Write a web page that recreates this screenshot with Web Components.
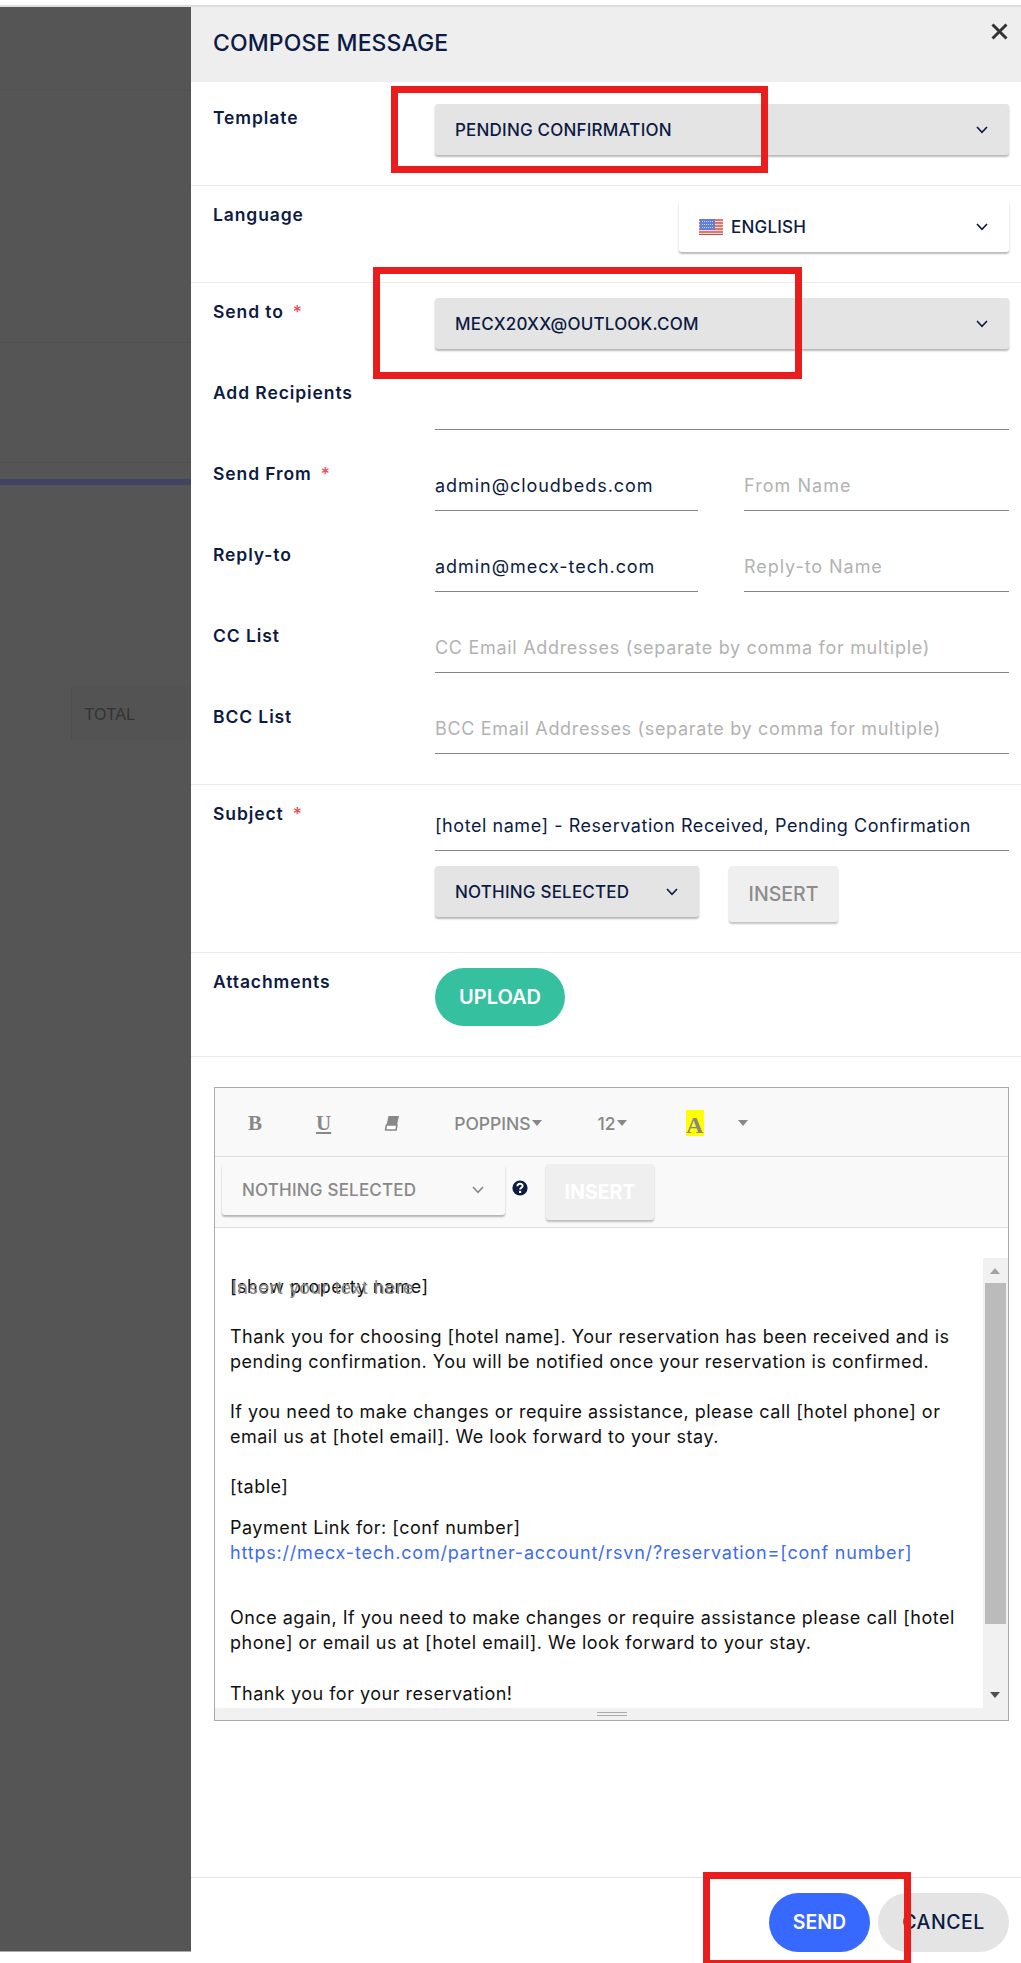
<!DOCTYPE html>
<html>

<head>
    <meta charset="utf-8">
    <title>compose message</title>
    <style>
        html, body { margin: 0; background: #fff; overflow: hidden; }
        body { font-family: Inter, "Noto Sans", sans-serif; color: #0d1b43; }
    </style>
</head>

<body>
    <compose-app>
        <side-backdrop></side-backdrop>
        <compose-panel>
            <form-section pad="22px 0 30px">
                <field-row label="Template" offset="2"><select-box value="PENDING CONFIRMATION"></select-box></field-row>
            </form-section>
            <form-section pad="15px 0 30px">
                <field-row label="Language" offset="2">
                    <select-box value="ENGLISH" kind="white" style="width:330px;margin-left:244px"><flag-icon slot="icon"></flag-icon></select-box>
                </field-row>
            </form-section>
            <form-section pad="15px 0 30px" gap="32px">
                <field-row label="Send to" required offset="2"><select-box value="MECX20XX@OUTLOOK.COM"></select-box></field-row>
                <field-row label="Add Recipients"><line-input></line-input></field-row>
                <field-row label="Send From" required>
                    <two-inputs><line-input value="admin@cloudbeds.com" style="letter-spacing:.95px"></line-input><line-input placeholder="From Name" style="letter-spacing:1.05px"></line-input></two-inputs>
                </field-row>
                <field-row label="Reply-to">
                    <two-inputs><line-input value="admin@mecx-tech.com" style="letter-spacing:.95px"></line-input><line-input placeholder="Reply-to Name" style="letter-spacing:.95px"></line-input></two-inputs>
                </field-row>
                <field-row label="CC List"><line-input placeholder="CC Email Addresses (separate by comma for multiple)" style="letter-spacing:.7px"></line-input></field-row>
                <field-row label="BCC List"><line-input placeholder="BCC Email Addresses (separate by comma for multiple)" style="letter-spacing:.67px"></line-input></field-row>
            </form-section>
            <form-section pad="17px 0 30px" gap="15px">
                <field-row label="Subject" required><line-input value="[hotel name] - Reservation Received, Pending Confirmation"></line-input></field-row>
                <field-row>
                    <insert-pair>
                        <select-box value="NOTHING SELECTED" style="width:264px"></select-box>
                        <flat-button kind="grey" style="width:109px;margin-left:30px">INSERT</flat-button>
                    </insert-pair>
                </field-row>
            </form-section>
            <form-section pad="15px 0 30px">
                <field-row label="Attachments" offset="2"><pill-button color="green" style="width:130px;height:58px;font-size:20px;padding-bottom:0">UPLOAD</pill-button></field-row>
            </form-section>
            <rich-editor></rich-editor>
            <panel-footer>
                <pill-button color="blue" style="width:101px;height:59px">SEND</pill-button>
                <pill-button color="light" style="width:131px;height:59px">CANCEL</pill-button>
            </panel-footer>
        </compose-panel>
        <red-mark style="left:391px;top:86px;width:377px;height:87px"></red-mark>
        <red-mark style="left:373px;top:267px;width:429px;height:112px"></red-mark>
        <red-mark style="left:703px;top:1872px;width:208px;height:95px"></red-mark>
    </compose-app>
</body>
<script>
    const chevron = `<svg width="12" height="8" viewBox="0 0 12 8" fill="none" stroke="currentColor" stroke-width="1.6"><path d="M1 1l5 5.4L11 1"/></svg>`;

    class ComposeApp extends HTMLElement {
        constructor() {
            super();
            this.attachShadow({ mode: 'open' }).innerHTML = `
            <style>
                :host { display: block; height: 1958px; overflow: hidden; margin-top: 5px; }
                #grid { display: grid; grid-template-columns: 191px 830px; border-top: 2px solid #ddd; height: 1944px; }
            </style>
            <div id="grid"><slot></slot></div>`;
        }
    }
    customElements.define('compose-app', ComposeApp);

    class SideBackdrop extends HTMLElement {
        constructor() {
            super();
            this.attachShadow({ mode: 'open' }).innerHTML = `
            <style>
                :host { display: block; background: #555; height: 1944px; border-bottom: 1px solid #aaa; }
                .line { border-bottom: 1px solid #505151; }
                #bar { height: 6px; background: #3f4463; margin-top: 16px; }
                #total { margin: 202px 0 0 71px; height: 53px; background: #535353; border-left: 1px solid #4e4e4e; padding-left: 12px;
                    font-size: 16.5px; line-height: 55px; color: #333; letter-spacing: -.2px; }
            </style>
            <div class="line" style="height:83px"></div>
            <div class="line" style="height:251px"></div>
            <div class="line" style="height:119px"></div>
            <div id="bar"></div>
            <div id="total">TOTAL</div>`;
        }
    }
    customElements.define('side-backdrop', SideBackdrop);

    class ComposePanel extends HTMLElement {
        constructor() {
            super();
            this.attachShadow({ mode: 'open' }).innerHTML = `
            <style>
                :host { display: flex; flex-direction: column; background: #fff; min-width: 0; }
                header { display: flex; justify-content: space-between; height: 72px; padding: 0 13px 3px 22px; background: #eee; }
                h1 { margin: 0; align-self: center; font-size: 23px; font-weight: 500; letter-spacing: .1px; }
                svg { margin-top: 16px; }
            </style>
            <header>
                <h1>COMPOSE MESSAGE</h1>
                <svg width="17" height="17" viewBox="0 0 17 17" stroke="#333" stroke-width="3"><path d="M1.5 1.5l14 14M15.5 1.5l-14 14"/></svg>
            </header>
            <slot></slot>`;
        }
    }
    customElements.define('compose-panel', ComposePanel);

    class FormSection extends HTMLElement {
        constructor() {
            super();
            this.attachShadow({ mode: 'open' }).innerHTML = `
            <style>
                :host { display: flex; flex-direction: column; border-bottom: 1px solid #ececec; }
            </style>
            <slot></slot>`;
        }
        connectedCallback() {
            this.style.padding = this.getAttribute('pad');
            this.style.gap = this.getAttribute('gap') || '0';
        }
    }
    customElements.define('form-section', FormSection);

    class FieldRow extends HTMLElement {
        constructor() {
            super();
            this.attachShadow({ mode: 'open' }).innerHTML = `
            <style>
                :host { display: grid; grid-template-columns: 222px 574px; padding-left: 22px; }
                #label { font-size: 17.5px; font-weight: 600; line-height: 24px; letter-spacing: .9px; white-space: nowrap; }
                #star { color: #f4484f; margin-left: 9px; font-weight: 500; }
            </style>
            <div id="label"></div>
            <div><slot></slot></div>`;
        }
        connectedCallback() {
            const label = this.shadowRoot.querySelector('#label');
            label.textContent = this.getAttribute('label') || '';
            label.style.paddingTop = (this.getAttribute('offset') || 0) + 'px';
            if (this.hasAttribute('required')) {
                const star = document.createElement('span');
                star.id = 'star';
                star.textContent = '*';
                label.append(star);
            }
        }
    }
    customElements.define('field-row', FieldRow);

    class SelectBox extends HTMLElement {
        constructor() {
            super();
            this.attachShadow({ mode: 'open' }).innerHTML = `
            <style>
                :host { display: flex; align-items: center; height: 51px; box-sizing: border-box; padding: 0 21px 0 20px; border-radius: 3px;
                    background: #e4e4e4; color: #0d1b43; box-shadow: 0 2px 2px rgba(0, 0, 0, .28); font-size: 17px; font-weight: 500; letter-spacing: .2px; }
                :host([kind=white]) { background: #fff; }
                :host([kind=faded]) { background: #f9f9f9; color: #888; }
                #text { flex: 1; white-space: nowrap; }
                svg { display: block; }
                ::slotted(flag-icon) { margin-right: 8px; }
            </style>
            <slot name="icon"></slot>
            <span id="text"></span>${chevron}`;
        }
        connectedCallback() {
            this.shadowRoot.querySelector('#text').textContent = this.getAttribute('value');
        }
    }
    customElements.define('select-box', SelectBox);

    class FlagIcon extends HTMLElement {
        constructor() {
            super();
            this.attachShadow({ mode: 'open' }).innerHTML = `
            <style>
                :host { display: block; width: 24px; height: 16px; }
                svg { display: block; }
            </style>
            <svg width="24" height="16" viewBox="0 0 24 16">
                <rect width="24" height="16" fill="#f4d6d2"/>
                <path d="M0 1h24M0 4h24M0 7h24M0 10h24M0 13h24" stroke="#d9584c" stroke-width="1.5"/>
                <rect y="15" width="24" height="1" fill="#b9534a"/>
                <rect x="1" width="15" height="11" fill="#5f7fd8"/>
                <path d="M3 2.500h11M3 5.500h11M3 8.500h11" stroke="#c7d4f5" stroke-width="1" stroke-dasharray="1 1"/>
            </svg>`;
        }
    }
    customElements.define('flag-icon', FlagIcon);

    class LineInput extends HTMLElement {
        constructor() {
            super();
            this.attachShadow({ mode: 'open' }).innerHTML = `
            <style>
                :host { display: block; height: 49px; box-sizing: border-box; border-bottom: 1px solid #858585; font-size: 18px; letter-spacing: .55px; line-height: 48px; white-space: nowrap; }
                #v { color: #0d1b43; }
                #v.empty { color: #b2b2b2; }
            </style>
            <span id="v"></span>`;
        }
        connectedCallback() {
            const v = this.shadowRoot.querySelector('#v');
            v.textContent = this.getAttribute('value') || this.getAttribute('placeholder') || '';
            v.classList.toggle('empty', !this.hasAttribute('value'));
        }
    }
    customElements.define('line-input', LineInput);

    class TwoInputs extends HTMLElement {
        constructor() {
            super();
            this.attachShadow({ mode: 'open' }).innerHTML = `
            <style>
                :host { display: grid; grid-template-columns: 263px 265px; column-gap: 46px; }
            </style>
            <slot></slot>`;
        }
    }
    customElements.define('two-inputs', TwoInputs);

    class InsertPair extends HTMLElement {
        constructor() {
            super();
            this.attachShadow({ mode: 'open' }).innerHTML = `
            <style>
                :host { display: flex; align-items: flex-start; }
            </style>
            <slot></slot>`;
        }
    }
    customElements.define('insert-pair', InsertPair);

    class FlatButton extends HTMLElement {
        constructor() {
            super();
            this.attachShadow({ mode: 'open' }).innerHTML = `
            <style>
                :host { display: flex; align-items: center; justify-content: center; height: 56px; border-radius: 3px; background: #efefef;
                    box-shadow: 0 2px 2px rgba(0, 0, 0, .24); font-size: 19.5px; font-weight: 500; color: #8c8c8c; }
                :host([kind=ghost]) { color: #fff; font-weight: 700; }
            </style>
            <slot></slot>`;
        }
    }
    customElements.define('flat-button', FlatButton);

    class PillButton extends HTMLElement {
        constructor() {
            super();
            this.attachShadow({ mode: 'open' }).innerHTML = `
            <style>
                :host { display: flex; align-items: center; justify-content: center; box-sizing: border-box; border-radius: 30px; padding-bottom: 2px;
                    font-size: 19.5px; font-weight: 600; color: #fff; }
                :host([color=green]) { background: #35c0a0; }
                :host([color=blue]) { background: #3768ff; }
                :host([color=light]) { background: #e4e4e4; color: #0d1b43; font-weight: 500; letter-spacing: .5px; }
            </style>
            <slot></slot>`;
        }
    }
    customElements.define('pill-button', PillButton);

    class RichEditor extends HTMLElement {
        constructor() {
            super();
            this.attachShadow({ mode: 'open' }).innerHTML = `
            <style>
                :host { display: block; margin: 30px 0 0 23px; width: 795px; height: 634px; box-sizing: border-box; border: 1px solid #aaa; background: #fff; }
                .bar { background: #f9f9f9; border-bottom: 1px solid #ddd; box-sizing: border-box; display: flex; }
                #top { height: 69px; align-items: center; color: #888; font-size: 17.5px; font-weight: 500; padding-top: 2px; }
                #second { height: 71px; padding: 7px 0 0 7px; align-items: flex-start; }
                .serif { font: bold 21px "Liberation Serif", serif; color: #888; }
                .caret { width: 0; height: 0; border: 5px solid transparent; border-top: 6px solid #888; border-bottom: 0; margin-left: 1px; }
                #hl { background: #ff0; width: 18px; height: 26px; text-align: center; line-height: 30px; margin-left: 59px; font-size: 24px; }
                #help { margin: 16px 18px 0 7px; display: block; }
                #main { display: flex; height: 480px; }
                #text { position: relative; flex: 1; padding: 46px 0 0 15px; overflow: hidden; font-size: 18px; letter-spacing: .5px; line-height: 25px; color: #111; white-space: nowrap; }
                p { margin: 0 0 25px; }
                a { color: #3d6bf5; text-decoration: none; letter-spacing: .8px; }
                #hint { position: absolute; left: 17px; top: 47px; color: #888; }
                #scroll { width: 25px; margin-top: 30px; background: #f1f1f1; position: relative; }
                #arrow-up, #arrow-down { position: absolute; left: 7px; width: 0; height: 0; border: 5px solid transparent; }
                #arrow-up { top: 10px; border-top: 0; border-bottom: 6px solid #a3a3a3; }
                #arrow-down { bottom: 10px; border-bottom: 0; border-top: 6px solid #505050; }
                #thumb { position: absolute; left: 2px; top: 25px; width: 21px; height: 341px; background: #bbb; }
                #status { height: 12px; background: #f1f1f1; display: flex; align-items: center; justify-content: center; }
                #status i { display: block; width: 30px; height: 1px; border-top: 1px solid #aaa; border-bottom: 1px solid #aaa; padding-top: 1px; }
            </style>
            <div class="bar" id="top">
                <span class="serif" style="margin-left:33px">B</span>
                <span class="serif" style="margin-left:54px;text-decoration:underline">U</span>
                <svg style="margin-left:53px" width="15" height="15" viewBox="0 0 15 15">
                    <path d="M4.500 0H15L13 9H2.500z" fill="#888"/>
                    <path d="M2.500 9H13l-1 5H1.500z" fill="#fff" stroke="#888" stroke-width="1.6" stroke-linejoin="round"/>
                </svg>
                <span style="margin-left:55px">POPPINS</span><span class="caret"></span>
                <span style="margin-left:56px">12</span><span class="caret"></span>
                <span class="serif" id="hl">A</span>
                <span class="caret" style="margin-left:34px"></span>
            </div>
            <div class="bar" id="second">
                <select-box value="NOTHING SELECTED" kind="faded" style="width:283px"></select-box>
                <svg id="help" width="16" height="16" viewBox="0 0 16 16">
                    <circle cx="8" cy="8" r="7.6" fill="#0d1b43"/>
                    <path d="M5.400 6.200c0-3.200 5.200-3.200 5.200-.2 0 1.800-2.500 1.800-2.500 3.600" fill="none" stroke="#fff" stroke-width="2"/>
                    <rect x="7" y="10.800" width="2.200" height="2.200" fill="#fff"/>
                </svg>
                <flat-button kind="ghost" style="width:108px">INSERT</flat-button>
            </div>
            <div id="main">
                <div id="text">
                    <span id="hint">Insert your text here</span>
                    <p>[show property name]</p>
                    <p>Thank you for choosing [hotel name]. Your reservation has been received and is<br>pending confirmation. You will be notified once your reservation is confirmed.</p>
                    <p>If you need to make changes or require assistance, please call [hotel phone] or<br>email us at [hotel email]. We look forward to your stay.</p>
                    <p style="margin-bottom:16px">[table]</p>
                    <p style="margin-bottom:40px">Payment Link for: [conf number]<br><a>https://mecx-tech.com/partner-account/rsvn/?reservation=[conf number]</a></p>
                    <p style="margin-bottom:26px">Once again, If you need to make changes or require assistance please call [hotel<br>phone] or email us at [hotel email]. We look forward to your stay.</p>
                    <p>Thank you for your reservation!</p>
                </div>
                <div id="scroll"><div id="arrow-up"></div><div id="thumb"></div><div id="arrow-down"></div></div>
            </div>
            <div id="status"><i></i></div>`;
        }
    }
    customElements.define('rich-editor', RichEditor);

    class PanelFooter extends HTMLElement {
        constructor() {
            super();
            this.attachShadow({ mode: 'open' }).innerHTML = `
            <style>
                :host { display: flex; justify-content: flex-end; gap: 8px; margin-top: auto; padding: 15px 12px 0 0; border-top: 1px solid #e4e4e4; }
            </style>
            <slot></slot>`;
        }
    }
    customElements.define('panel-footer', PanelFooter);

    // red annotation boxes drawn on top of the screenshot
    class RedMark extends HTMLElement {
        constructor() {
            super();
            this.attachShadow({ mode: 'open' }).innerHTML = `
            <style>
                :host { display: block; position: fixed; box-sizing: border-box; border: 7.5px solid #ea1c1c; pointer-events: none; }
            </style>`;
        }
    }
    customElements.define('red-mark', RedMark);
</script>

</html>
